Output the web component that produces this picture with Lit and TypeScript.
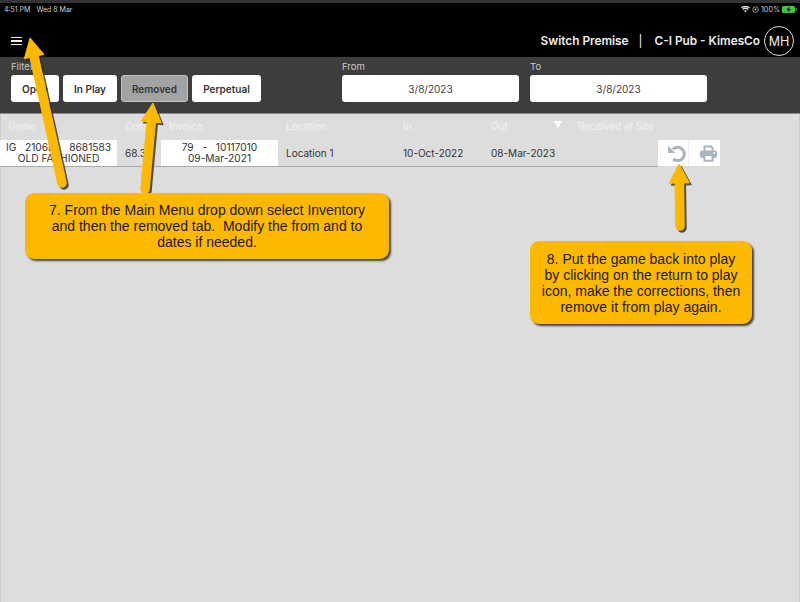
import { LitElement, html, css, svg } from "lit";
import { customElement } from "lit/decorators.js";

const arrow = (x1: number, y1: number, x2: number, y2: number) => {
  const dx = x2 - x1, dy = y2 - y1, l = Math.hypot(dx, dy);
  const ux = dx / l, uy = dy / l, px = -uy, py = ux;
  const bx = x2 - ux * 19, by = y2 - uy * 19;
  const head = `${x2},${y2} ${bx + px * 10},${by + py * 10} ${bx - px * 10},${by - py * 10}`;
  return svg`
    <g transform="translate(2 2)" opacity="0.75" fill="#222" stroke="#222">
      <line x1=${x1} y1=${y1} x2=${bx} y2=${by} stroke-width="9.5" stroke-linecap="round"/>
      <polygon points=${head} stroke-width="1" stroke-linejoin="round"/>
    </g>
    <g fill="#fdb900" stroke="#fdb900">
      <line x1=${x1} y1=${y1} x2=${bx} y2=${by} stroke-width="9.5" stroke-linecap="round"/>
      <polygon points=${head} stroke-width="1" stroke-linejoin="round"/>
    </g>`;
};

@customElement("app-root")
export class AppRoot extends LitElement {
  static styles = css`
    :host { display: block; position: relative; width: 800px; height: 602px; overflow: hidden;
      background: #dddddd; box-shadow: inset 1px 0 #cccccc, inset -1px 0 #cccccc;
      font-family: Inter, "Liberation Sans", Arial, sans-serif; color: #333; }
    .top { height: 57px; background: #000; border-top: 3px solid #333; box-sizing: border-box; color: #fff; display: flex; flex-direction: column; }
    .status { height: 11px; display: flex; justify-content: space-between; align-items: center; padding: 0 0 0 4px; font-size: 7px; color: #ccc; margin-top: 1px; }
    .status .l { display: flex; gap: 6px; }
    .status .r { display: flex; align-items: center; gap: 2px; padding-right: 3px; font-size: 7.2px; }
    .nav { flex: 1; display: flex; align-items: center; justify-content: space-between; padding: 10px 6px 0 11px; }
    .menu { display: flex; flex-direction: column; gap: 2px; width: 11px; }
    .menu i { display: block; height: 1.5px; background: #eee; }
    .right { display: flex; align-items: center; font-size: 11.8px; font-weight: 600; color: #eee; }
    .sep { margin: 0 12px 0 10px; font-weight: 400; }
    .avatar { width: 30px; height: 30px; border: 1px solid #ddd; border-radius: 50%; box-sizing: border-box; display: flex; align-items: center; justify-content: center; font-size: 12.5px; font-weight: 400; margin-left: 4px; }
    .filters { height: 57px; background: #3d3d3d; border-bottom: 1px solid #8a8a8a; box-sizing: border-box; display: flex; padding: 4px 0 0 11px; }
    .label { font-size: 9.5px; color: #ccc; height: 14px; line-height: 12px; }
    .group { display: flex; flex-direction: column; }
    .btns { display: flex; gap: 4px; }
    .btn { height: 27px; box-sizing: border-box; background: #fff; border-radius: 3px; display: flex; align-items: center; justify-content: center; font-size: 10px; font-weight: 600; color: #333; }
    .btn.active { background: #a3a3a3; border: 1px solid #c2c2c2; }
    .date { height: 27px; background: #fff; border-radius: 3px; display: flex; align-items: center; justify-content: center; font-size: 10px; color: #444; }
    .from { margin-left: 81px; width: 177px; }
    .to { margin-left: 11px; width: 177px; }
    .table { display: grid; grid-template-columns: 117px 44px 117px 117px 88px 87px 88px 62px 1fr; }
    .th { height: 26px; font-size: 10px; color: #f2f2f2; padding: 6px 0 0 8px; box-sizing: border-box; white-space: nowrap; position: relative; }
    .td { height: 27px; border-bottom: 1px solid #aaa; box-sizing: border-box; font-size: 10px; color: #333; display: flex; align-items: center; padding-left: 8px; white-space: nowrap; }
    .white { background: #fff; flex-direction: column; justify-content: center; align-items: center; padding: 0; line-height: 11px; font-size: 10.2px; }
    .wide { word-spacing: 1.5px; }
    .sort { position: absolute; right: 8px; top: 7px; width: 0; height: 0; border-left: 4px solid transparent; border-right: 4px solid transparent; border-top: 7px solid #fff; }
    .td.blank { border-bottom: none; }
    .acts { display: flex; height: 26px; background: #fff; padding: 0; border-bottom: none; }
    .acts span { width: 31px; height: 26px; display: flex; align-items: center; justify-content: flex-end; box-sizing: border-box; padding-right: 2px; }
    .acts span:first-child { border-right: 1px solid #eee; }
    .acts span:last-child { padding-right: 3px; }
    .callout { position: absolute; background: #fdb900; border-radius: 9px; box-shadow: 2px 2px 2px rgba(30,30,30,.8); display: flex; align-items: center; justify-content: center; text-align: center; font-family: "Liberation Sans", Arial, sans-serif; font-size: 14px; line-height: 16px; color: #1a1a1a; white-space: pre; }
    .c1 { left: 25px; top: 193px; width: 364px; height: 66px; }
    .c2 { left: 530px; top: 241px; width: 222px; height: 83px; }
    .arrows { position: absolute; left: 0; top: 0; pointer-events: none; }
  `;

  render() {
    return html`
      <div class="top">
        <div class="status">
          <div class="l"><span>4:51 PM</span><span>Wed 8 Mar</span></div>
          <div class="r">
            <svg width="9" height="7" viewBox="0 0 18 14"><path d="M9 13 6 9.600a4.500 4.500 0 0 1 6 0zM4.400 8 2.600 6a9.500 9.500 0 0 1 12.800 0L13.600 8a7 7 0 0 0-9.200 0zM1.400 4.800 0 3a13.500 13.500 0 0 1 18 0l-1.400 1.800a11 11 0 0 0-15.200 0z" fill="#ddd"/></svg>
            <svg width="7" height="7" viewBox="0 0 14 14"><circle cx="7" cy="7" r="5.500" fill="none" stroke="#bbb" stroke-width="1.500"/><circle cx="7" cy="7" r="2" fill="#bbb"/></svg>
            <span>100%</span>
            <svg width="15" height="7" viewBox="0 0 15 7"><rect width="13" height="7" rx="1.500" fill="#3fc43f"/><rect x="13.500" y="2" width="1.200" height="3" fill="#888"/><path d="M7.500 .5 4.500 4h2l-1 2.500L9 3H7z" fill="#111"/></svg>
          </div>
        </div>
        <div class="nav">
          <div class="menu"><i></i><i></i><i></i></div>
          <div class="right">
            <span>Switch Premise</span><span class="sep">|</span><span>C-I Pub - KimesCo</span>
            <div class="avatar">MH</div>
          </div>
        </div>
      </div>
      <div class="filters">
        <div class="group">
          <div class="label">Filter</div>
          <div class="btns">
            <div class="btn" style="width:48px">Open</div>
            <div class="btn" style="width:54px">In Play</div>
            <div class="btn active" style="width:67px">Removed</div>
            <div class="btn" style="width:69px">Perpetual</div>
          </div>
        </div>
        <div class="group from"><div class="label">From</div><div class="date">3/8/2023</div></div>
        <div class="group to"><div class="label">To</div><div class="date">3/8/2023</div></div>
      </div>
      <div class="table">
        <div class="th">Game</div><div class="th">Cost</div><div class="th">Invoice</div><div class="th">Location</div><div class="th">In</div><div class="th">Out<span class="sort"></span></div><div class="th" style="grid-column: span 2">Received at Site</div><div class="th"></div>
        <div class="td white"><span class="wide">IG&nbsp;&nbsp;2106BL&nbsp;&nbsp;8681583</span><span>OLD FASHIONED</span></div>
        <div class="td">68.32</div>
        <div class="td white"><span class="wide">79&nbsp;&nbsp;-&nbsp;&nbsp;10117010</span><span>09-Mar-2021</span></div>
        <div class="td">Location 1</div>
        <div class="td">10-Oct-2022</div>
        <div class="td">08-Mar-2023</div>
        <div class="td"></div>
        <div class="td acts">
          <span><svg width="19" height="17" viewBox="0 0 19 17"><path d="M5.800 4.200a6.700 6.700 0 1 1 .4 9.800" fill="none" stroke="#aab4bf" stroke-width="3"/><path d="M1 .8V8h7.200z" fill="#aab4bf"/></svg></span>
          <span><svg width="17" height="17" viewBox="0 0 17 17"><path d="M4.500 6V1.500h6.500l1.500 1.500V6" fill="none" stroke="#aab4bf" stroke-width="2"/><rect y="5.500" width="17" height="7.500" rx="2" fill="#aab4bf"/><path d="M4.500 11v4.800h8V11" fill="#fff" stroke="#aab4bf" stroke-width="2"/><circle cx="14" cy="8" r="1" fill="#fff"/></svg></span>
        </div>
        <div class="td blank"></div>
      </div>
      <svg class="arrows" width="800" height="602">
        ${arrow(62, 183, 30, 38)}
        ${arrow(145, 189, 153, 103)}
        ${arrow(680, 226, 679, 164)}
      </svg>
      <div class="callout c1">7. From the Main Menu drop down select Inventory
and then the removed tab.  Modify the from and to
dates if needed.</div>
      <div class="callout c2">8. Put the game back into play
by clicking on the return to play
icon, make the corrections, then
remove it from play again.</div>
    `;
  }
}
